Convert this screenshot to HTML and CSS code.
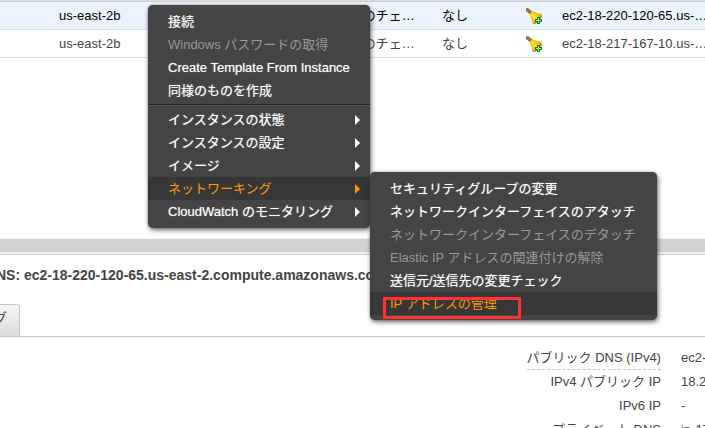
FILE: index.html
```html
<!DOCTYPE html>
<html lang="ja">

<head>
    <meta charset="UTF-8" />
    <title>EC2 インスタンス</title>
    <meta name="viewport" content="width=device-width, initial-scale=1.0" />
    <link rel="stylesheet" href="styles.css">
</head>

<body>

    <!-- bell icon, shared by the table rows -->
    <svg class="sprite" aria-hidden="true">
        <defs>
            <linearGradient id="gold" x1="0" y1="1" x2="1" y2="0">
                <stop offset="0" stop-color="#dc9d00" />
                <stop offset="0.45" stop-color="#ffdf20" />
                <stop offset="1" stop-color="#d39408" />
            </linearGradient>
        </defs>
        <symbol id="bell" viewBox="0 0 16 16">
            <path d="M0 0.6 L2 0 L7 4.3 L5 6.8 L0 3z" fill="#94601f" />
            <path d="M1 1.2 L6 5.2" stroke="#c4924e" stroke-width="1" />
            <path d="M5 4.5 C7 3 9 4 11 5 L15.3 6 L16 9 L9 16 L6.5 15.6 C6 12 5.5 11 4.6 9.4 C4 7.5 4 6 5 4.5z" fill="url(#gold)" />
            <path d="M15 6.2 L16 9 L9 16 L6.5 15.6 C10 13 13 10 15 6.2z" fill="#c08a20" />
            <path d="M9 12.5a2 2 0 0 0 3 2z" fill="#8f7a55" />
            <path d="M11 9h3v2h2v3h-2v2h-3v-2h-2v-3h2z" fill="#0a7a12" />
            <path d="M12 10h1v2h2v1h-2v2h-1v-2h-2v-1h2z" fill="#a5f28c" />
        </symbol>
    </svg>

    <div class="console">

        <div class="list-pane">
            <table class="instances">
                <colgroup>
                    <col class="col-select">
                    <col class="col-zone">
                    <col class="col-check">
                    <col class="col-alarm">
                    <col class="col-bell">
                    <col>
                </colgroup>
                <tbody>
                    <tr class="selected">
                        <td></td>
                        <td>us-east-2b</td>
                        <td>2/2 のチェック</td>
                        <td>なし</td>
                        <td class="bell-cell"><svg class="bell"><use href="#bell" /></svg></td>
                        <td>ec2-18-220-120-65.us-east-2</td>
                    </tr>
                    <tr>
                        <td></td>
                        <td>us-east-2b</td>
                        <td>2/2 のチェック</td>
                        <td>なし</td>
                        <td class="bell-cell"><svg class="bell"><use href="#bell" /></svg></td>
                        <td>ec2-18-217-167-10.us-east-2</td>
                    </tr>
                </tbody>
            </table>
        </div>

        <div class="detail-pane">
            <div class="splitter"></div>
            <h1 class="summary">パブリック DNS: ec2-18-220-120-65.us-east-2.compute.amazonaws.com</h1>
            <div class="tabs">
                <button class="tab">タグ</button>
            </div>
            <dl class="fields">
                <dt><span class="hint">パブリック DNS (IPv4)</span></dt>
                <dd>ec2-18-220-120-65.us-east-2.compute.amazonaws.com</dd>
                <dt>IPv4 パブリック IP</dt>
                <dd>18.220.120.65</dd>
                <dt>IPv6 IP</dt>
                <dd>-</dd>
                <dt>プライベート DNS</dt>
                <dd>ip-172-31-20-65.us-east-2.compute.internal</dd>
            </dl>
        </div>

    </div>

    <!-- context menu -->
    <ul class="menu context">
        <li><button>接続</button></li>
        <li><button disabled>Windows パスワードの取得</button></li>
        <li><button>Create Template From Instance</button></li>
        <li><button>同様のものを作成</button></li>
        <li class="separator"></li>
        <li><button class="parent">インスタンスの状態</button></li>
        <li><button class="parent">インスタンスの設定</button></li>
        <li><button class="parent">イメージ</button></li>
        <li>
            <button class="parent active">ネットワーキング</button>
            <ul class="menu submenu">
                <li><button>セキュリティグループの変更</button></li>
                <li><button>ネットワークインターフェイスのアタッチ</button></li>
                <li><button disabled>ネットワークインターフェイスのデタッチ</button></li>
                <li><button disabled>Elastic IP アドレスの関連付けの解除</button></li>
                <li><button>送信元/送信先の変更チェック</button></li>
                <li class="marked"><button class="active">IP アドレスの管理</button></li>
            </ul>
        </li>
        <li><button class="parent">CloudWatch のモニタリング</button></li>
    </ul>

</body>

</html>
```

FILE: styles.css
```css
body {
    margin: 0;
    font-family: "Liberation Sans", "Noto Sans CJK JP", sans-serif;
    font-size: 13px;
    color: #444;
    background: #fff;
    overflow: hidden;
}

button {
    font: inherit;
    cursor: pointer;
}

.sprite {
    position: absolute;
    width: 0;
    height: 0;
}

.console {
    display: grid;
    grid-template-rows: minmax(0, 5fr) minmax(0, 4fr);
    height: 100vh;
}

/* instance table */
.list-pane {
    border-top: 1px solid #ddd;
    overflow: hidden;
}

.instances {
    width: calc(100% + 12px);
    table-layout: fixed;
    border-collapse: separate;
    border-spacing: 0;
    border-top: 1px solid #ccc;
}

.col-select {
    width: 51px;
}

.col-zone {
    width: 282px;
}

.col-check {
    width: 101px;
}

.col-alarm {
    width: 84px;
}

.col-bell {
    width: 36px;
}

.instances td {
    height: 27px;
    line-height: 27px;
    padding: 0 8px;
    border-bottom: 1px solid #ddd;
    white-space: nowrap;
    overflow: hidden;
    text-overflow: ellipsis;
}

.instances .selected td {
    color: #000;
    background: #eaf3fe;
}

.instances .bell-cell {
    text-overflow: clip;
}

.bell {
    display: block;
    width: 16px;
    height: 16px;
    overflow: visible;
}

/* details */
.detail-pane {
    overflow: hidden;
}

.splitter {
    height: 13px;
    background: #d3d3d3;
    border-top: 1px solid #f3f3f3;
    border-bottom: 2px solid #f3f3f3;
}

.summary {
    margin: 0 0 0 -88px;
    padding: 10px 0;
    border-top: 1px solid #ccc;
    font-size: 14px;
    line-height: 20px;
    white-space: nowrap;
}

.tabs {
    display: flex;
    margin-left: -34px;
    padding-top: 9px;
    border-bottom: 1px solid #c8c8c8;
}

.tab {
    height: 32px;
    padding: 0 12px 4px;
    border: 1px solid #c4c4c4;
    border-bottom: 0;
    border-radius: 4px 4px 0 0;
    background: linear-gradient(#f8f8f8, #dcdcdc);
    color: #444;
    font-size: 14px;
    line-height: 24px;
}

.fields {
    display: grid;
    grid-template-columns: minmax(0, 15fr) minmax(0, 1fr);
    margin: 0;
    padding-top: 9px;
    line-height: 24px;
    white-space: nowrap;
}

.fields dt {
    height: 24px;
    text-align: right;
}

.fields dd {
    height: 24px;
    margin: 0;
    padding-left: 20px;
}

.hint {
    display: inline-block;
    height: 23px;
    border-bottom: 1px dashed #c4c4c4;
}

/* menus */
.menu {
    position: absolute;
    margin: 0;
    padding: 5px 0;
    list-style: none;
    background: #444;
    border-radius: 5px;
    box-shadow: 0 0 1px #444, 1px 2px 5px rgba(0, 0, 0, 0.6);
}

.menu li {
    position: relative;
}

.menu button {
    display: flex;
    align-items: center;
    justify-content: space-between;
    width: 100%;
    height: 23px;
    padding: 0 20px;
    border: 0;
    background: none;
    color: #fff;
    line-height: 23px;
    text-align: left;
    white-space: nowrap;
    text-shadow: 0 0 1px rgba(255, 255, 255, 0.6);
}

.menu button:disabled {
    color: #999;
    text-shadow: none;
    cursor: default;
}

.menu button.active {
    color: #ff9900;
    background: #373737;
    text-shadow: none;
}

.menu .parent {
    padding-right: 10px;
}

.parent::after {
    content: '';
    border: 5px solid transparent;
    border-left-color: currentColor;
    border-right: 0;
}

.menu .separator {
    margin: 2px 0;
    border-top: 1px solid #222;
    border-bottom: 1px solid #555;
}

.context {
    top: 5px;
    left: 148px;
    width: 222px;
}

.submenu {
    top: -5px;
    left: 100%;
    width: 287px;
}

/* red frame round the chosen item */
.marked::after {
    content: '';
    position: absolute;
    top: 5px;
    left: 13px;
    width: 132px;
    height: 16px;
    border: 3px solid #ff3333;
    pointer-events: none;
}
```
